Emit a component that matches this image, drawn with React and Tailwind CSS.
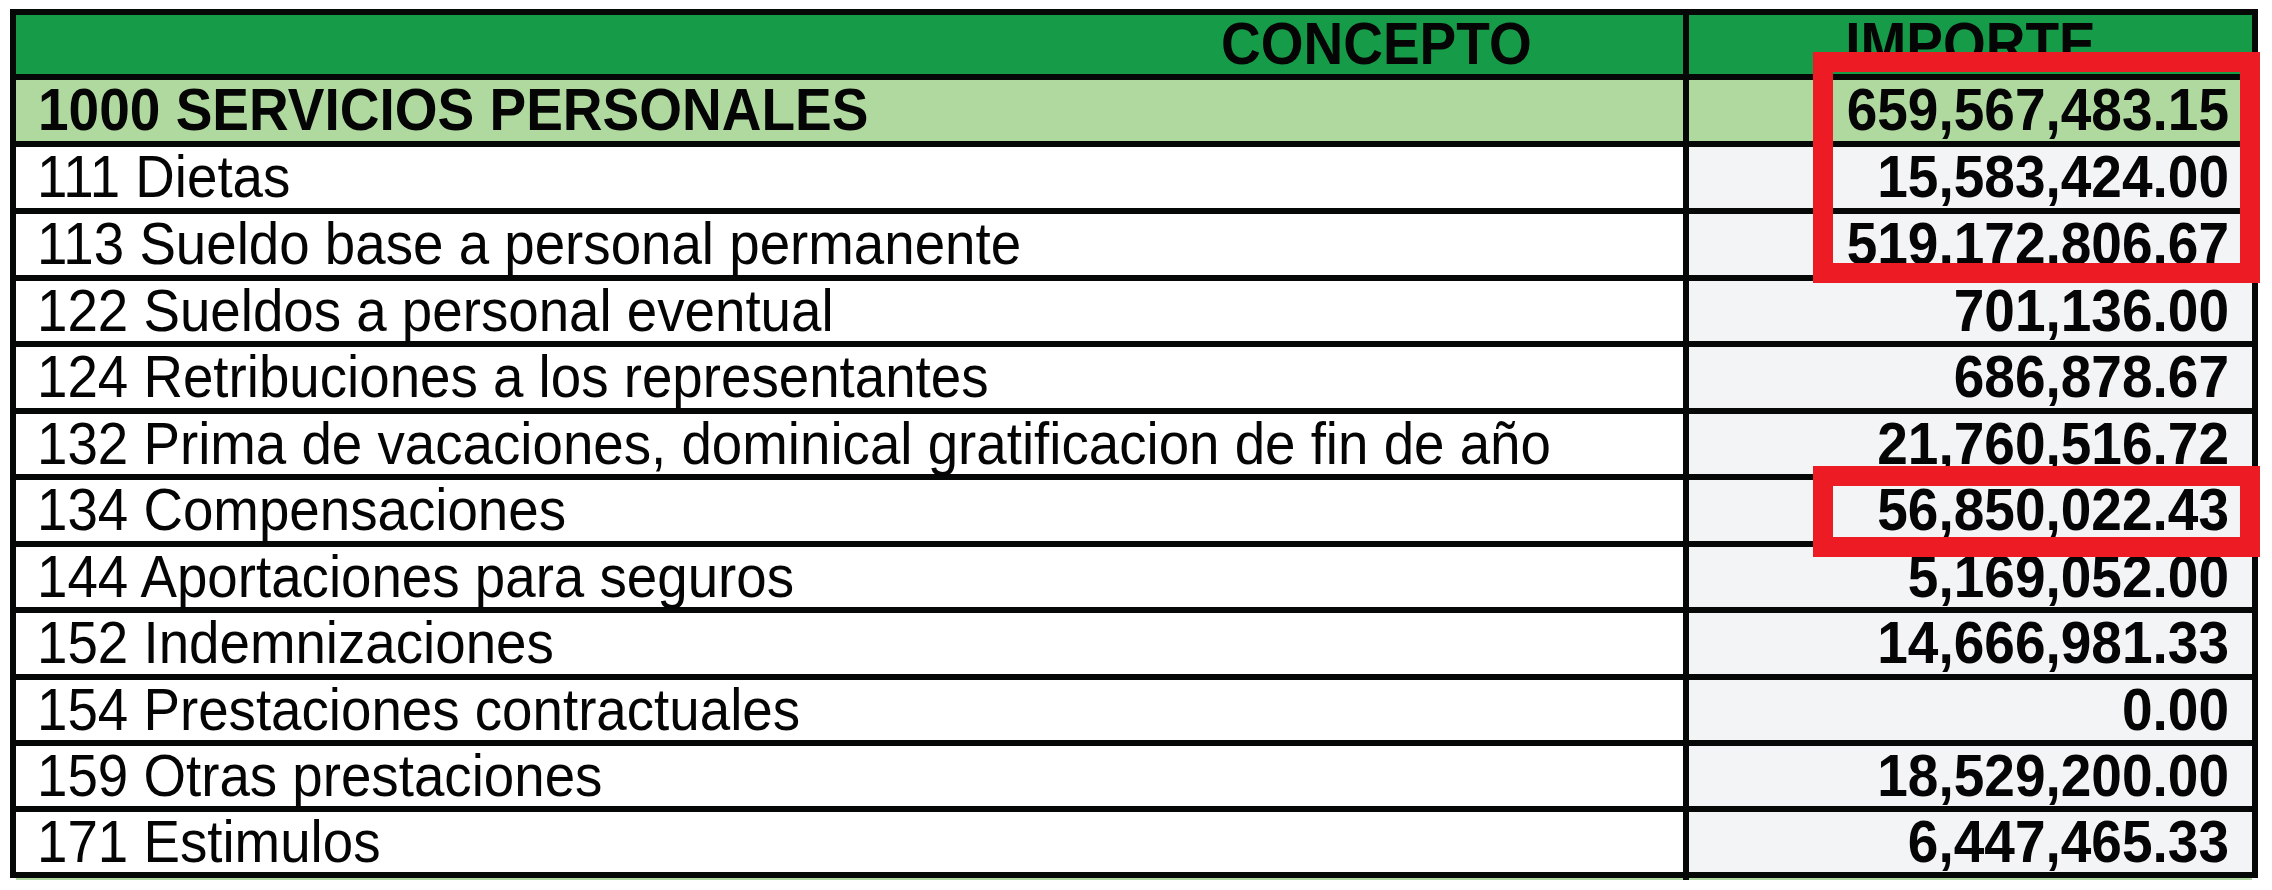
import React from "react";

const rows = [
  { c: "111 Dietas", v: "15,583,424.00", h: "h-[61px]" },
  { c: "113 Sueldo base a personal permanente", v: "519,172,806.67", h: "h-[61px]" },
  { c: "122 Sueldos a personal eventual", v: "701,136.00", h: "h-[60px]" },
  { c: "124 Retribuciones a los representantes", v: "686,878.67", h: "h-[61px]" },
  { c: "132 Prima de vacaciones, dominical gratificacion de fin de año", v: "21,760,516.72", h: "h-[60px]" },
  { c: "134 Compensaciones", v: "56,850,022.43", h: "h-[61px]" },
  { c: "144 Aportaciones para seguros", v: "5,169,052.00", h: "h-[60px]" },
  { c: "152 Indemnizaciones", v: "14,666,981.33", h: "h-[61px]" },
  { c: "154 Prestaciones contractuales", v: "0.00", h: "h-[60px]" },
  { c: "159 Otras prestaciones", v: "18,529,200.00", h: "h-[60px]" },
  { c: "171 Estimulos", v: "6,447,465.33", h: "h-[60px]" },
];

function T({ children, bold }) {
  return (
    <span
      className={
        "inline-block leading-none scale-y-[1.07] " +
        (bold ? "font-bold text-[55px]" : "font-normal text-[54.7px]")
      }
    >
      {children}
    </span>
  );
}

export default function App() {
  return (
    <div className="relative w-[2272px] h-[890px] bg-white font-['Liberation_Sans',Arial,sans-serif] text-[#050505] overflow-hidden">
      <div className="pt-[9px] pl-[10px]">
        <div className="w-[2248px] border-[6px] border-[#060808]">
          {/* header */}
          <div className="grid grid-cols-[1673px_563px] h-[65px] border-b-[6px] border-[#060808] bg-[#169b48]">
            <div className="flex items-center pl-[1205px] border-r-[6px] border-[#060808]">
              <T bold>CONCEPTO</T>
            </div>
            <div className="flex items-center justify-center">
              <T bold>IMPORTE</T>
            </div>
          </div>
          {/* 1000 row */}
          <div className="grid grid-cols-[1673px_563px] h-[67px] border-b-[6px] border-[#060808] bg-[#b0d9a0]">
            <div className="flex items-center pl-[22px] border-r-[6px] border-[#060808]">
              <T bold>1000 SERVICIOS PERSONALES</T>
            </div>
            <div className="flex items-center justify-end pr-[23px]">
              <T bold>659,567,483.15</T>
            </div>
          </div>
          {rows.map((r, i) => (
            <div
              key={i}
              className={
                "grid grid-cols-[1673px_563px] " +
                r.h +
                (i < rows.length - 1 ? " border-b-[6px] border-[#060808] box-content" : "")
              }
            >
              <div className="flex items-center pl-[21px] bg-white border-r-[6px] border-[#060808]">
                <T>{r.c}</T>
              </div>
              <div className="flex items-center justify-end pr-[23px] bg-[#f3f4f6]">
                <T bold>{r.v}</T>
              </div>
            </div>
          ))}
        </div>
        <div className="ml-[6px] grid grid-cols-[1667px_6px_563px] h-[2px]">
          <div className="bg-[#b0d9a0]" />
          <div className="bg-[#060808]" />
          <div className="bg-[#b0d9a0]" />
        </div>
      </div>

      {/* red highlight boxes */}
      <div className="absolute left-[1813px] top-[52px] w-[447px] h-[231px] border-[20px] border-[#ed1c24]" />
      <div className="absolute left-[1813px] top-[466px] w-[447px] h-[91px] border-[20px] border-[#ed1c24]" />
    </div>
  );
}
